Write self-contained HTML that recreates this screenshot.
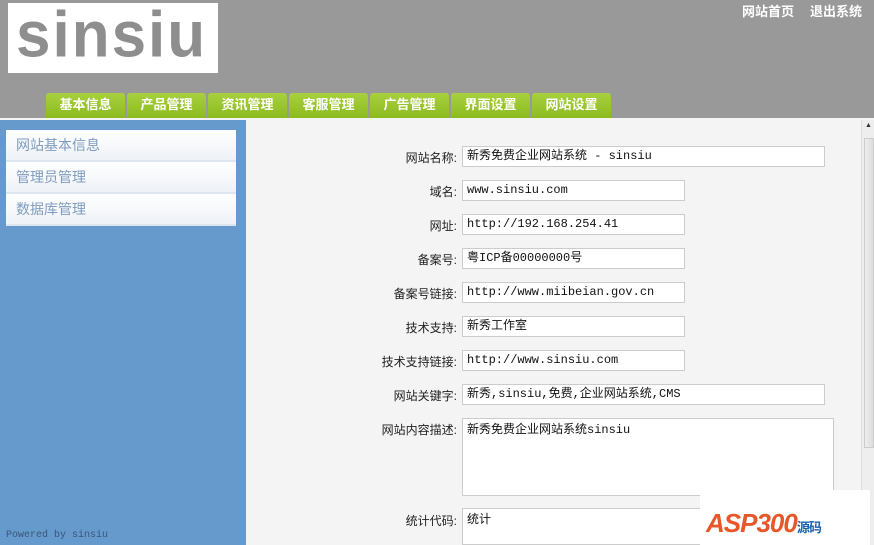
<!DOCTYPE html>
<html><head><meta charset="utf-8"><style>
*{margin:0;padding:0;box-sizing:border-box}
html,body{width:874px;height:545px;overflow:hidden}
body{background:#f4f4f4;font-family:"Liberation Sans","Noto Sans CJK SC",sans-serif;font-size:12px;position:relative}
#hd{position:absolute;left:0;top:0;width:874px;height:118px;background:#999}
#logo{position:absolute;left:8px;top:3px;width:210px;height:70px;background:#fff;overflow:hidden}
#logo span{position:absolute;left:8px;top:-2px;color:#8e8e8e;font-size:62px;font-weight:bold;line-height:70px;letter-spacing:2px;transform:scaleY(1.05);transform-origin:50% 70%}
#top{position:absolute;right:12px;top:1px;color:#fff;font-weight:bold;font-size:13px}
#top span{margin-left:16px}
.tab{position:absolute;top:93px;width:79px;height:25px;background:linear-gradient(#a8d040,#8cbb1e);color:#fff;font-weight:bold;font-size:13px;text-align:center;line-height:23px;border-radius:3px 3px 0 0}
#side{position:absolute;left:0;top:120px;width:246px;height:425px;background:#6699cc}
#menu{position:absolute;left:6px;top:10px;width:230px;background:#fff}
#menu div{height:32px;line-height:30px;padding-left:10px;color:#7f9cbf;font-size:14px;border-bottom:2px solid #dde6f0;background:linear-gradient(#fff,#eef2f6)}
#pw{position:absolute;left:6px;top:530px;color:#39577a;font-family:"Liberation Mono",monospace;font-size:10px}
#sb{position:absolute;left:861px;top:120px;width:13px;height:425px;background:#eee;border-left:1px solid #ddd}
.l{position:absolute;width:200px;left:257px;text-align:right;font-size:12px;color:#222}
.i{position:absolute;left:462px;height:21px;background:#fff;border:1px solid #ccc;font-family:"Liberation Mono","Noto Sans CJK SC",monospace;font-size:12px;line-height:19px;padding-left:4px;color:#111;overflow:hidden}
</style></head><body>
<div id="hd"><div id="logo"><span>sinsiu</span></div><div id="top"><span>网站首页</span><span>退出系统</span></div>
<div class="tab" style="left:46px">基本信息</div><div class="tab" style="left:127px">产品管理</div><div class="tab" style="left:208px">资讯管理</div><div class="tab" style="left:289px">客服管理</div><div class="tab" style="left:370px">广告管理</div><div class="tab" style="left:451px">界面设置</div><div class="tab" style="left:532px">网站设置</div></div>
<div id="side"><div id="menu"><div>网站基本信息</div><div>管理员管理</div><div>数据库管理</div></div></div>
<div id="pw">Powered by sinsiu</div>
<div id="sb"><div style="position:absolute;top:2px;left:3px;font-size:7px;color:#333">▲</div><div style="position:absolute;top:18px;left:2px;width:10px;height:310px;background:linear-gradient(90deg,#eee,#ddd);border:1px solid #ccc"></div></div>
<div class="l" style="top:149px">网站名称:</div><div class="i" style="top:146px;width:363px">新秀免费企业网站系统 - sinsiu</div>
<div class="l" style="top:183px">域名:</div><div class="i" style="top:180px;width:223px">www.sinsiu.com</div>
<div class="l" style="top:217px">网址:</div><div class="i" style="top:214px;width:223px">http://192.168.254.41</div>
<div class="l" style="top:251px">备案号:</div><div class="i" style="top:248px;width:223px">粤ICP备00000000号</div>
<div class="l" style="top:285px">备案号链接:</div><div class="i" style="top:282px;width:223px">http://www.miibeian.gov.cn</div>
<div class="l" style="top:319px">技术支持:</div><div class="i" style="top:316px;width:223px">新秀工作室</div>
<div class="l" style="top:353px">技术支持链接:</div><div class="i" style="top:350px;width:223px">http://www.sinsiu.com</div>
<div class="l" style="top:387px">网站关键字:</div><div class="i" style="top:384px;width:363px">新秀,sinsiu,免费,企业网站系统,CMS</div>
<div class="l" style="top:421px">网站内容描述:</div><div class="i" style="top:418px;width:372px;height:78px;line-height:18px;padding-top:2px">新秀免费企业网站系统sinsiu</div>
<div class="l" style="top:512px">统计代码:</div><div class="i" style="top:508px;width:372px;height:37px;line-height:18px;padding-top:2px">统计</div>
<div style="position:absolute;left:700px;top:490px;width:170px;height:55px;background:#fff;font-weight:bold;font-style:italic;font-size:26px;color:#e8572a;padding:18px 0 0 6px;letter-spacing:-1px">ASP300<span style="font-size:13px;color:#1a5fb0;font-style:normal">源码</span></div>
</body></html>
